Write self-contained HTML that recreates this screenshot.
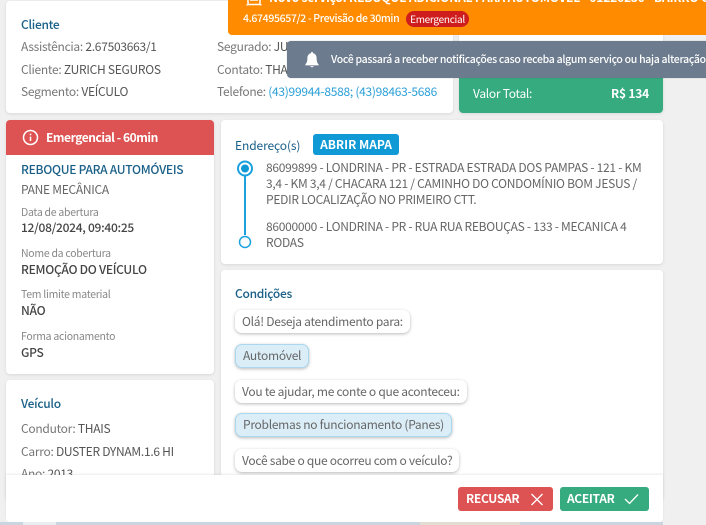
<!DOCTYPE html>
<html lang="pt"><head><meta charset="utf-8"><style>
html,body{margin:0;padding:0}
body{width:706px;height:525px;overflow:hidden;background:#f0f0f0;position:relative;font-family:"Noto Sans CJK SC","Liberation Sans",sans-serif;font-size:12px;color:#777;letter-spacing:-.28px}
.card{position:absolute;background:#fff;border-radius:4px;box-shadow:0 1px 3px rgba(0,0,0,.1)}
.t{position:absolute;white-space:nowrap;line-height:16px}
.d{color:#555}
.h{color:#1a6088;font-weight:500}
.lbl{color:#888;font-size:10.5px}
.val{color:#444;font-weight:500}
.b{position:absolute;background:#fff;border-radius:7px;box-shadow:0 1px 3px rgba(0,0,0,.28);height:23px;line-height:23px;padding:0 7px;color:#666;white-space:nowrap;box-sizing:border-box}
.s{background:#dbeef8;border:1px solid #a9d8ef;height:24px;line-height:22px}
.a{position:absolute;left:266px;color:#666;white-space:nowrap;line-height:16px}
</style></head><body>

<div class="card" style="left:6px;top:1px;width:447px;height:112px"></div>
<div class="t h" style="left:21px;top:17px">Cliente</div>
<div class="t" style="left:21px;top:39px">Assistência: <span class="d">2.67503663/1</span></div>
<div class="t" style="left:21px;top:62px">Cliente: <span class="d">ZURICH SEGUROS</span></div>
<div class="t" style="left:21px;top:84px">Segmento: <span class="d">VEÍCULO</span></div>
<div class="t" style="left:217px;top:39px">Segurado: <span class="d">JU</span></div>
<div class="t" style="left:217px;top:62px">Contato: <span class="d">THA</span></div>
<div class="t" style="left:217px;top:84px">Telefone: <span style="color:#2a9fd8">(43)99944-8588; (43)98463-5686</span></div>

<div class="card" style="left:459px;top:1px;width:204px;height:112px"></div>
<div style="position:absolute;left:459px;top:70px;width:204px;height:43px;background:#36ab80;border-radius:0 0 4px 4px"></div>
<div class="t" style="left:473px;top:86px;color:#fff">Valor Total:</div>
<div class="t" style="left:611px;top:86px;color:#fff;font-weight:700;letter-spacing:-.2px">R$ 134</div>

<div class="card" style="left:6px;top:120px;width:208px;height:254px"></div>
<div style="position:absolute;left:6px;top:120px;width:208px;height:35px;background:#dd5252;border-radius:4px 4px 0 0"></div>
<svg style="position:absolute;left:22px;top:129px" width="17" height="17" viewBox="0 0 17 17" fill="none" stroke="#fff" stroke-width="1.5"><circle cx="8.5" cy="8.5" r="7"/><path d="M8.5 7.6v4.4M8.5 4.6v1.6"/></svg>
<div class="t" style="left:46px;top:130px;color:#fff;font-weight:700;letter-spacing:-.45px">Emergencial - 60min</div>
<div class="t h" style="left:21px;top:162px">REBOQUE PARA AUTOMÓVEIS</div>
<div class="t" style="left:21px;top:182px;color:#666">PANE MECÂNICA</div>
<div class="t lbl" style="left:21px;top:205px">Data de abertura</div>
<div class="t val" style="left:21px;top:220px">12/08/2024, 09:40:25</div>
<div class="t lbl" style="left:21px;top:246px">Nome da cobertura</div>
<div class="t val" style="left:21px;top:262px">REMOÇÃO DO VEÍCULO</div>
<div class="t lbl" style="left:21px;top:287px">Tem limite material</div>
<div class="t val" style="left:21px;top:303px">NÃO</div>
<div class="t lbl" style="left:21px;top:329px">Forma acionamento</div>
<div class="t val" style="left:21px;top:345px">GPS</div>

<div class="card" style="left:6px;top:380px;width:208px;height:120px"></div>
<div class="t h" style="left:21px;top:396px">Veículo</div>
<div class="t" style="left:21px;top:421px">Condutor: <span class="d">THAIS</span></div>
<div class="t" style="left:21px;top:444px">Carro: <span class="d">DUSTER DYNAM.1.6 HI</span></div>
<div class="t" style="left:21px;top:466px">Ano: <span class="d">2013</span></div>

<div class="card" style="left:221px;top:120px;width:442px;height:144px"></div>
<div class="t h" style="left:235px;top:138px;font-weight:400;letter-spacing:-.1px">Endereço(s)</div>
<div style="position:absolute;left:313px;top:134px;width:86px;height:21px;background:#0f9ad6;border-radius:3px;color:#fff;font-weight:700;text-align:center;line-height:21px;letter-spacing:0">ABRIR MAPA</div>
<svg style="position:absolute;left:234px;top:158px" width="22" height="94" viewBox="0 0 22 94" fill="none"><path d="M11 18V77" stroke="#1ba1de" stroke-width="2"/><circle cx="11" cy="10.5" r="7" stroke="#1ba1de" stroke-width="2" fill="#fff"/><circle cx="11" cy="10.5" r="4" fill="#0f9ad6"/><circle cx="11" cy="84" r="5.5" stroke="#1ba1de" stroke-width="1.5" fill="#fff"/></svg>
<div class="a" style="top:160px">86099899 - LONDRINA - PR - ESTRADA ESTRADA DOS PAMPAS - 121 - KM</div>
<div class="a" style="top:176px">3,4 - KM 3,4 / CHACARA 121 / CAMINHO DO CONDOMÍNIO BOM JESUS /</div>
<div class="a" style="top:192px">PEDIR LOCALIZAÇÃO NO PRIMEIRO CTT.</div>
<div class="a" style="top:219px">86000000 - LONDRINA - PR - RUA RUA REBOUÇAS - 133 - MECANICA 4</div>
<div class="a" style="top:235px">RODAS</div>

<div class="card" style="left:221px;top:270px;width:442px;height:230px"></div>
<div class="t h" style="left:235px;top:286px">Condições</div>
<div class="b" style="left:235px;top:310px">Olá! Deseja atendimento para:</div>
<div class="b s" style="left:235px;top:344px">Automóvel</div>
<div class="b" style="left:235px;top:380px">Vou te ajudar, me conte o que aconteceu:</div>
<div class="b s" style="left:235px;top:413px">Problemas no funcionamento (Panes)</div>
<div class="b" style="left:235px;top:449px">Você sabe o que ocorreu com o veículo?</div>

<div style="position:absolute;left:6px;top:475px;width:657px;height:47px;background:#fff;border-radius:0 0 4px 4px;box-shadow:0 -1px 2px rgba(0,0,0,.08)"></div>
<div style="position:absolute;left:458px;top:487px;width:95px;height:24px;background:#dd5252;border-radius:3px"></div>
<div class="t" style="left:466px;top:491px;color:#fff;font-weight:700;letter-spacing:-.3px">RECUSAR</div>
<svg style="position:absolute;left:530px;top:492px" width="14" height="14" viewBox="0 0 14 14" fill="none" stroke="#fff" stroke-width="1.3"><path d="M1.5 2l11 11M12.500 2l-11 11"/></svg>
<div style="position:absolute;left:560px;top:487px;width:89px;height:24px;background:#36ab80;border-radius:3px"></div>
<div class="t" style="left:567px;top:491px;color:#fff;font-weight:700;letter-spacing:-.3px">ACEITAR</div>
<svg style="position:absolute;left:624px;top:493px" width="15" height="12" viewBox="0 0 15 12" fill="none" stroke="#fff" stroke-width="1.3"><path d="M1 6l4.500 4.500L14 1.500"/></svg>

<div style="position:absolute;left:0;top:522px;width:663px;height:3px;background:#cbd5df"></div>
<div style="position:absolute;left:23px;top:522px;width:33px;height:3px;background:#e9edf0"></div>
<div style="position:absolute;left:420px;top:522px;width:100px;height:3px;background:#e2dcd2"></div>

<div style="position:absolute;left:228px;top:0;width:478px;height:35px;background:#ff8c00;border-radius:0 0 0 4px;overflow:hidden">
<svg style="position:absolute;left:18px;top:-6px" width="16" height="12" viewBox="0 0 16 12" fill="none" stroke="#fff" stroke-width="1.5"><path d="M2 1v9.500h12V1M1 10.500v1M15 10.500v1M4 6h8"/></svg>
<div class="t" style="left:41px;top:-10px;color:#fff;font-weight:700;font-size:12px;letter-spacing:-.17px">Novo serviço: REBOQUE ADICIONAL PARA AUTOMÓVEL - 01226230 - BAIRRO CAM</div>
<div class="t" style="left:15px;top:11px;color:#fff;font-weight:500;font-size:10.5px;letter-spacing:-.35px">4.67495657/2 - Previsão de 30min</div>
<div style="position:absolute;left:178px;top:11px;width:63px;height:16px;background:#cf1c1c;border-radius:8px;color:#fff;font-size:10px;line-height:16px;text-align:center">Emergencial</div>
</div>

<div style="position:absolute;left:287px;top:41px;width:419px;height:37px;background:#6c7b8d;border-radius:4px 0 0 4px;overflow:hidden;box-shadow:0 0 1px rgba(0,0,0,.3)">
<svg style="position:absolute;left:18px;top:11px" width="14" height="16" viewBox="0 0 14 16" fill="#fff"><path d="M7 0a1.200 1.200 0 0 0-1.200 1.300C3.600 1.900 2.400 3.700 2.400 6c0 3.500-.8 5-2 6.500v.9h13.200v-.9c-1.200-1.500-2-3-2-6.500 0-2.300-1.200-4.100-3.400-4.700A1.200 1.200 0 0 0 7 0zM5.200 14.200a1.900 1.800 0 0 0 3.600 0z"/></svg>
<div class="t" style="left:44px;top:11px;color:#fff;font-size:10.5px;font-weight:500;letter-spacing:-.3px">Você passará a receber notificações caso receba algum serviço ou haja alteração do status</div>
</div>
</body></html>
